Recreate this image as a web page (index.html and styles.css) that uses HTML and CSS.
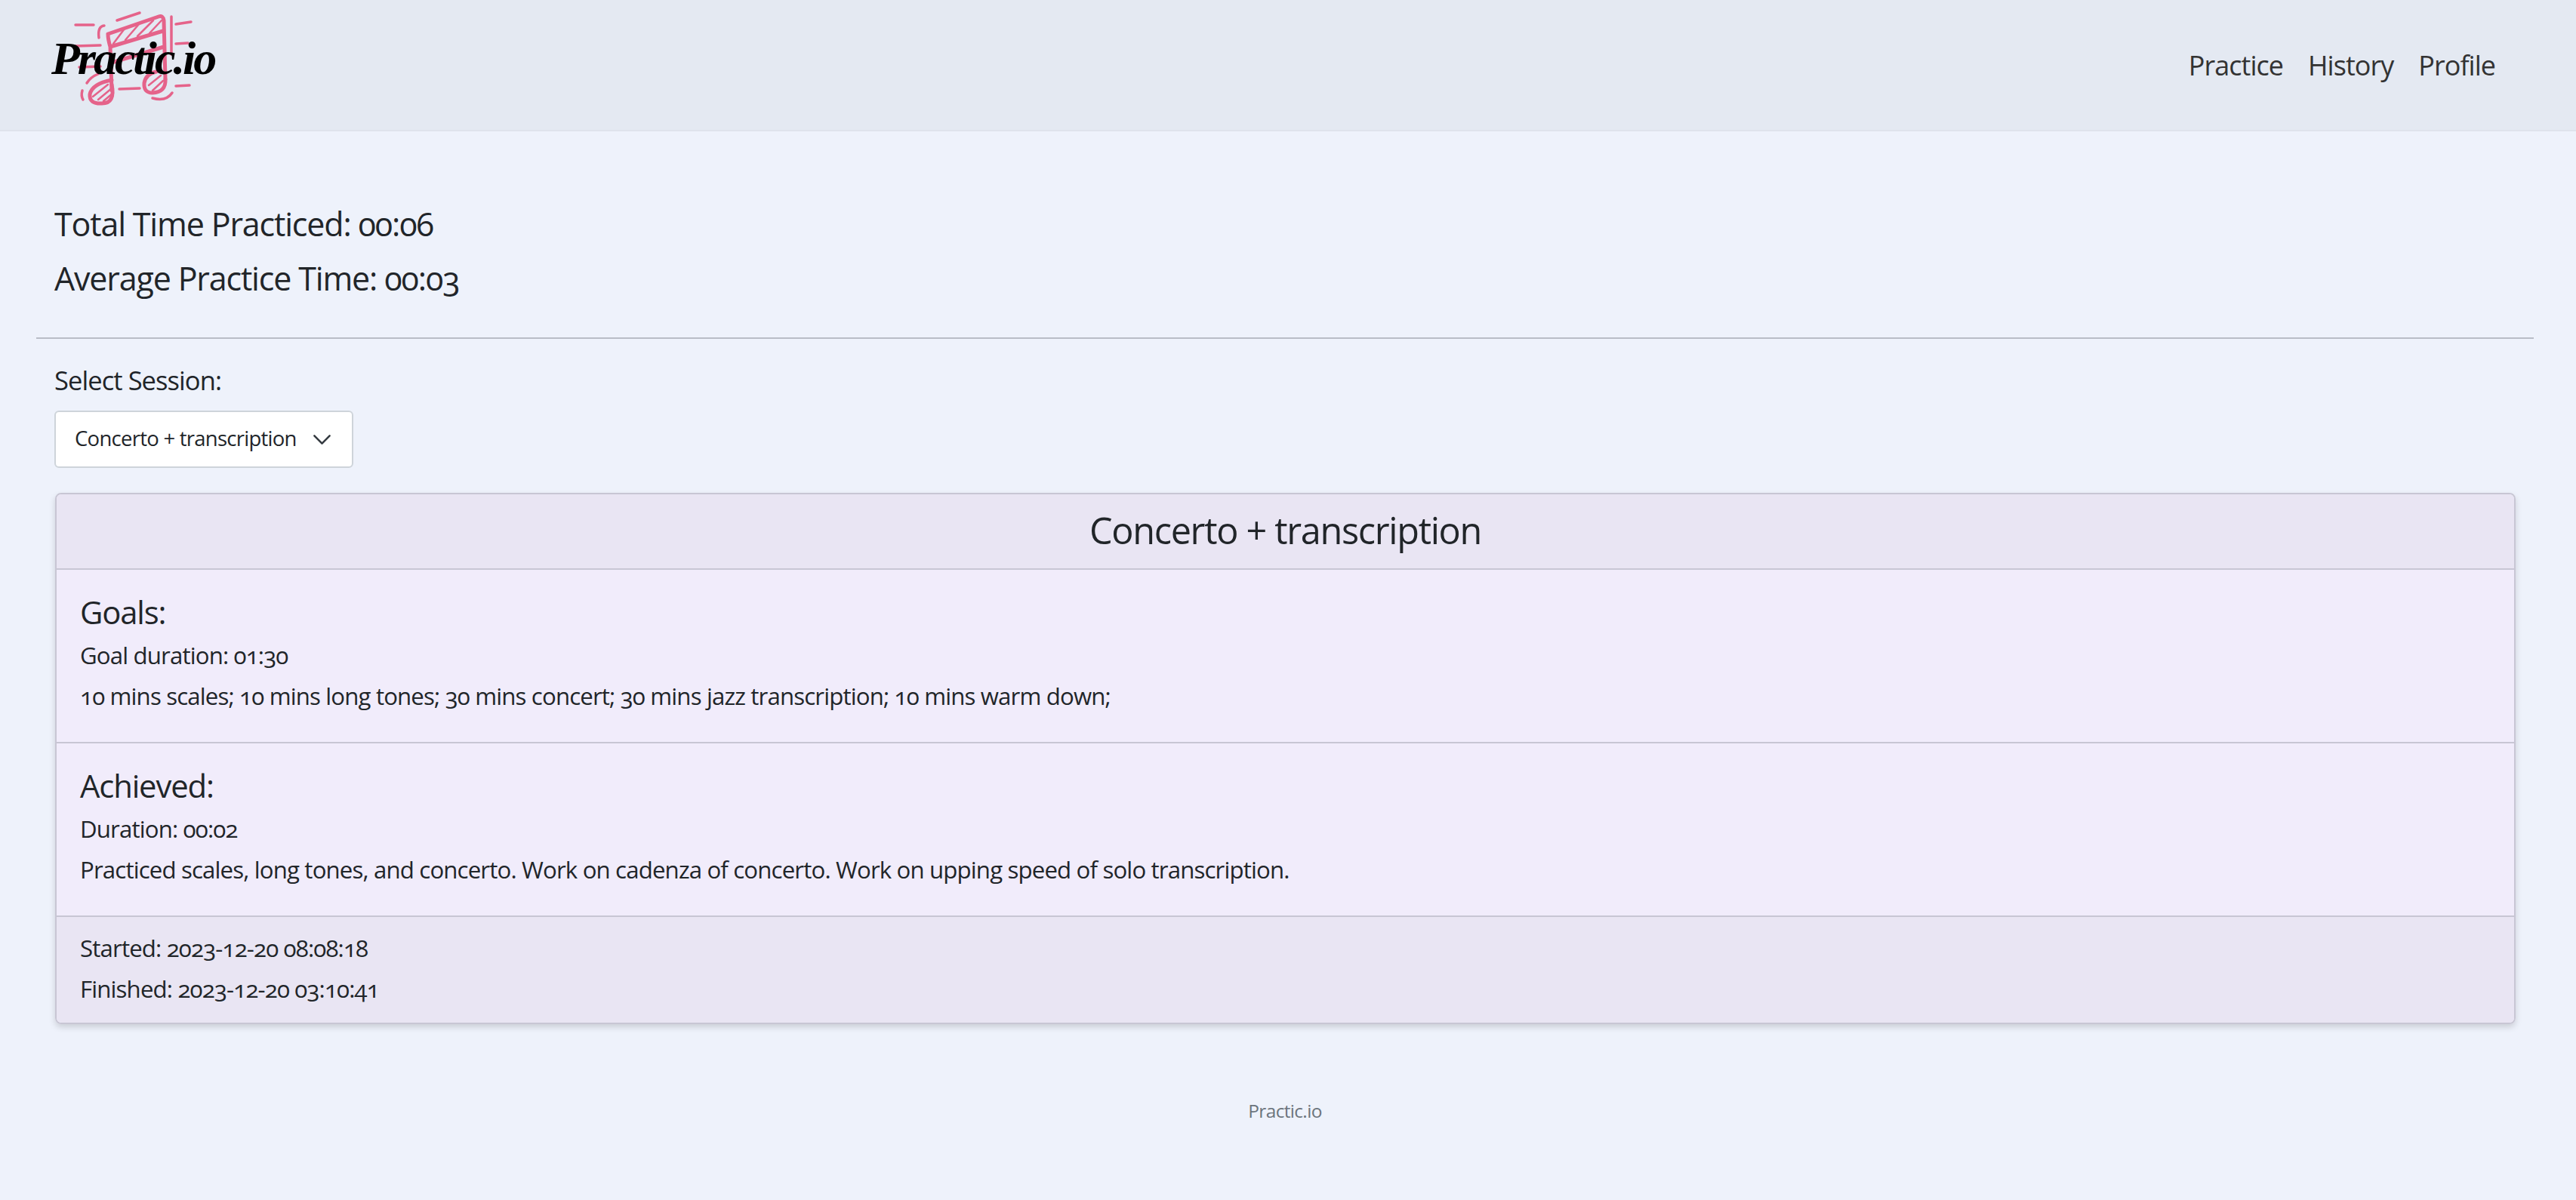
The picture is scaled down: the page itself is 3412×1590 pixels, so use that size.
FILE: index.html
```html
<!DOCTYPE html>
<html>
<head>
    <meta charset="UTF-8">
    <title>Practic.io</title>
    <link rel="stylesheet" href="styles.css">
</head>
<body>
<nav class="topBar">
    <a class="brand" href="#">
        <svg class="brandMark" viewBox="0 0 400 174" width="400" height="174" fill="none" stroke="#e5638a" stroke-linecap="round" stroke-linejoin="round">
            <!-- beam and stems -->
            <path d="M143 45 L210 22 Q216 20 217 27 L219 105 M143 45 Q143 52 146 62 L148 120 M146 62 L216 41 M148 83 L217 62" stroke-width="5"/>
            <!-- note heads -->
            <path d="M219 105 Q220 122 202 123 Q190 123 191 110 Q193 98 207 95 M148 112 Q153 137 135 137 Q118 138 119 125 Q122 111 148 106" stroke-width="5"/>
            <!-- hatching -->
            <path d="M150 58 L165 38 M166 53 L184 32 M182 48 L203 27 M198 44 L214 27 M123 128 L143 112 M130 132 L148 117 M137 134 L150 123 M197 113 L213 100 M202 120 L216 107" stroke-width="2.5"/>
            <!-- dashes round the note -->
            <path d="M155 27 L185 17 M227 22 L227 72 M233 32 L253 29 M233 58 L249 57 M100 33 L124 33 M138 34 Q129 35 131 50 M100 61 L133 60 M105 89 L133 88 M115 110 Q120 102 130 98 M109 120 Q107 127 110 132 M158 118 L185 117 M233 114 L251 113 M202 130 Q220 135 228 123" stroke-width="3.5"/>
        </svg>
        <span class="brandName">Practic.io</span>
    </a>
    <ul class="navList">
        <li><a href="#">Practice</a></li>
        <li><a href="#">History</a></li>
        <li><a href="#">Profile</a></li>
    </ul>
</nav>

<main class="content">
    <section class="totals">
        <h4>Total Time Practiced: 00:06</h4>
        <h4>Average Practice Time: 00:03</h4>
    </section>
    <hr class="rule">
    <section class="picker">
        <label for="session">Select Session:</label>
        <div class="selectBox" id="session">
            <span>Concerto + transcription</span>
            <svg viewBox="0 0 16 16" width="27" height="27" fill="none" stroke="#343a40" stroke-width="1.5" stroke-linecap="round" stroke-linejoin="round"><path d="M2 5l6 6 6-6"/></svg>
        </div>
    </section>

    <section class="sessionCard">
        <header class="cardHead">Concerto + transcription</header>
        <div class="cardBody">
            <h5>Goals:</h5>
            <p>Goal duration: 01:30</p>
            <p>10 mins scales; 10 mins long tones; 30 mins concert; 30 mins jazz transcription; 10 mins warm down;</p>
        </div>
        <div class="cardBody">
            <h5>Achieved:</h5>
            <p>Duration: 00:02</p>
            <p>Practiced scales, long tones, and concerto. Work on cadenza of concerto. Work on upping speed of solo transcription.</p>
        </div>
        <footer class="cardFoot">
            <p>Started: 2023-12-20 08:08:18</p>
            <p>Finished: 2023-12-20 03:10:41</p>
        </footer>
    </section>
</main>

<footer class="pageFoot">Practic.io</footer>
</body>
</html>
```

FILE: styles.css
```css
* {
    box-sizing: border-box;
    margin: 0;
    padding: 0;
    letter-spacing: -.027em;
}

body {
    background: #eef2fb;
    color: #212529;
    font-family: "Open Sans", "Noto Sans", sans-serif;
    font-size: 31.2px;
    font-variant-numeric: oldstyle-nums;
}

ul, li {
    list-style: none;
}

a {
    color: inherit;
    text-decoration: none;
}

.topBar {
    display: flex;
    align-items: center;
    justify-content: space-between;
    height: 174px;
    padding-right: 107px;
    background: #e4e9f2;
    border-bottom: 2px solid #dfe3ec;
}

.brand {
    position: relative;
    display: block;
    width: 400px;
    height: 172px;
}

.brandMark {
    position: absolute;
    left: 0;
    top: 0;
}

.brandName {
    position: absolute;
    left: 68px;
    top: 42px;
    font-family: "Liberation Serif", serif;
    font-style: italic;
    font-weight: 700;
    font-size: 62px;
    line-height: 70px;
    letter-spacing: -3px;
    color: #000;
    white-space: nowrap;
}

.navList {
    display: flex;
    gap: 33px;
    font-size: 36px;
    color: #333;
}

.content {
    padding: 87px 56px 0 48px;
}

.totals {
    padding: 0 24px;
}

.totals h4 {
    font-size: 43px;
    font-weight: 400;
    line-height: 72px;
}

.rule {
    margin-top: 42px;
    border: 0;
    border-top: 2px solid #b9bdc7;
}

.picker {
    padding: 31px 24px 0;
}

.picker label {
    display: block;
    font-size: 34.5px;
    line-height: 48px;
}

.selectBox {
    display: flex;
    align-items: center;
    justify-content: space-between;
    width: 396px;
    height: 76px;
    margin-top: 16px;
    padding: 0 26px 0 25px;
    background: #fff;
    border: 2px solid #ced4da;
    border-radius: 6px;
    font-size: 27.5px;
}

.selectBox span {
    position: relative;
    top: -2px;
}

.sessionCard {
    margin: 33px 24px 0 25px;
    border: 2px solid #c8c6d4;
    border-radius: 8px;
    overflow: hidden;
    box-shadow: 0 4px 8px rgba(0, 0, 0, .15);
}

.cardHead {
    height: 100px;
    line-height: 95px;
    text-align: center;
    font-size: 48.6px;
    background: #e9e5f3;
    border-bottom: 2px solid #c8c6d4;
}

.cardBody {
    height: 230px;
    padding: 26px 31px 0;
    background: #f1ecfb;
    border-bottom: 2px solid #c8c6d4;
}

.cardBody h5 {
    font-size: 41.8px;
    font-weight: 400;
    line-height: 60px;
}

.cardBody p, .cardFoot p {
    line-height: 54px;
}

.cardFoot {
    padding: 14px 31px 18px;
    background: #e9e5f3;
}

.pageFoot {
    margin: 98px 56px 0 48px;
    text-align: center;
    font-size: 24.5px;
    color: #6c757d;
}
```
